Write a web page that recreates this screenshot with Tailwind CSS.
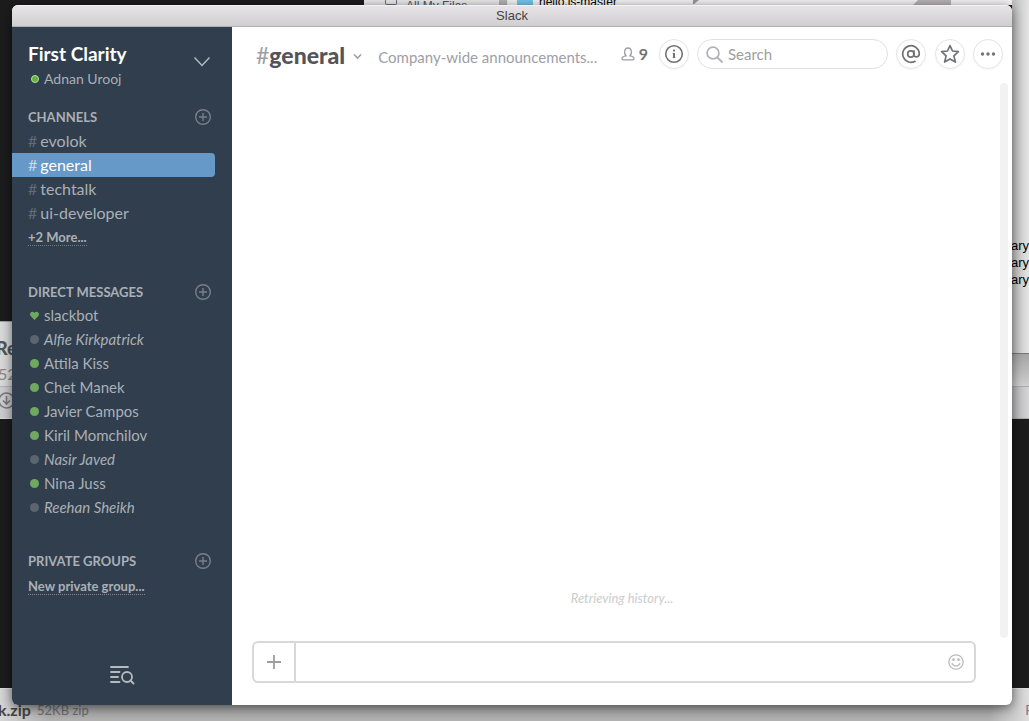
<!DOCTYPE html>
<html lang="en">
<head>
  <meta charset="UTF-8" />
  <meta name="viewport" content="width=device-width, initial-scale=1.0"/>
  <title>Slack</title>
  <script src="https://cdn.jsdelivr.net/npm/@tailwindcss/browser@4"></script>
</head>
<body class="relative h-screen overflow-hidden bg-[#1c1c1c] pt-[5px] pr-[17px] pb-4 pl-3 font-['Lato',sans-serif]">

  <!-- Windows behind -->
  <div aria-hidden="true">
    <div class="absolute top-0 right-0 left-[364px] h-[5px] overflow-hidden bg-[#ececec]">
      <div class="absolute top-0 left-[21px] h-[5px] w-3 rounded-b-xs border border-t-0 border-gray-500"></div>
      <span class="absolute top-0 left-[42px] font-['Liberation_Sans',sans-serif] text-xs leading-3 text-gray-600">All My Files</span>
      <div class="absolute top-0 left-[135px] h-[5px] w-2 bg-[#b5b5b5]"></div>
      <div class="absolute top-0 right-0 left-[144px] h-[5px] bg-[#f6f6f6]"></div>
      <div class="absolute top-0 left-[153px] h-[5px] w-4 bg-[#75c8ee]"></div>
      <span class="absolute -top-1 left-[175px] font-['Liberation_Sans',sans-serif] text-xs leading-3 text-black">hello.js-master</span>
      <svg class="absolute top-0 left-[329px]" width="6" height="5"><path d="M0 0h6L1 4H0z" fill="#9a9a9a"/></svg>
      <svg class="absolute top-0 left-[549px]" width="38" height="5"><path d="M5 0h33v5H0z" fill="#b9b4b8"/></svg>
    </div>
    <div class="absolute top-0 right-0 h-[353px] w-[17px] bg-linear-to-r from-[#bdbdbd] to-[#e4e4e4]"></div>
    <div class="absolute top-[237px] right-0 flex w-[17px] justify-end overflow-hidden font-['Liberation_Sans',sans-serif] text-[13px] leading-[17px] text-black"><span>uary<br>uary<br>uary</span></div>
    <div class="absolute top-[353px] right-0 h-[33px] w-[17px] border-t border-[#777] bg-linear-to-b from-[#a5a5a5] to-[#cfcfcf]"></div>
    <div class="absolute top-[386px] right-0 h-[33px] w-[17px] border-y border-[#aaa] bg-linear-to-r from-[#b5b5b8] to-[#d5d5d8]"></div>

    <div class="absolute top-[321px] left-0 h-[98px] w-3 overflow-hidden border-t border-gray-400 bg-[#dadada]">
      <div class="absolute top-4 -left-1 text-lg leading-5 font-black text-[#555]">Re</div>
      <div class="absolute top-11 -left-0.5 text-base leading-4 text-[#888]">52</div>
      <div class="absolute top-16 left-0 h-8 w-3 border-t border-[#b5b5b8] bg-[#cdcdd0]"></div>
      <svg class="absolute top-[70px] -left-0.5" width="17" height="17" fill="none" stroke="#7b7b7b" stroke-width="1.6"><circle cx="8.5" cy="8.5" r="7.5"/><path d="M8.5 4v8M5 8.5l3.500 3.500 3.500-3.500"/></svg>
    </div>

    <div class="absolute inset-x-0 bottom-0 h-[33px] border-t border-[#ddd] bg-linear-to-b from-[#a0a0a0] from-50% to-[#b2b2b2]">
      <div class="absolute top-0 left-0 h-8 w-12 bg-linear-to-r from-[#d6d6d6] to-transparent"></div>
      <div class="absolute top-0 right-0 h-8 w-10 bg-linear-to-l from-[#dedede] to-transparent"></div>
      <span class="absolute top-[11px] -left-0.5 text-base leading-5 font-bold text-[#444]">k.zip</span>
      <span class="absolute top-[11px] left-[37px] text-[13px] leading-5 text-[#6c6c6c]">52KB zip</span>
      <span class="absolute top-[11px] -right-1 text-[13px] leading-5 text-[#77778a]">P</span>
    </div>
  </div>

  <!-- App window -->
  <div class="relative flex h-full flex-col overflow-hidden rounded-md bg-white shadow-[0_2px_12px_rgba(0,0,0,0.55)]">
    <div class="flex h-[22px] shrink-0 items-center justify-center border-t border-b border-t-[#f2f0f2] border-b-[#b1aeb1] bg-linear-to-b from-[#e7e3e7] to-[#d0cfd0] font-['Liberation_Sans',sans-serif] text-[13px] leading-5 text-[#444]">Slack</div>

    <div class="flex min-h-0 grow">
      <!-- Sidebar -->
      <aside class="flex w-[220px] shrink-0 flex-col bg-[#303e4d] text-base leading-6 text-[#aab0b7]">
        <header class="flex h-[78px] items-start justify-between pt-3.5 pr-[21px] pl-4">
          <div>
            <h1 class="text-[19px] leading-[26px] font-bold text-white">First Clarity</h1>
            <p class="flex h-6 items-center gap-[5px] pl-[3px] text-sm"><span class="size-2 rounded-full border border-[#b8ddb0] bg-[#5fb336]"></span>Adnan Urooj</p>
          </div>
          <button class="mt-[15px]" aria-label="Team menu"><svg width="18" height="12" fill="none" stroke="#b5bac0" stroke-width="1.4"><path d="M1.500 1.500L9 9.500l7.500-8"/></svg></button>
        </header>

        <nav class="flex flex-col">
          <div class="flex h-6 items-center justify-between pr-5 pl-4">
            <h2 class="text-[13px] font-bold">CHANNELS</h2>
            <button aria-label="Add channel"><svg width="18" height="18" fill="none" stroke="#76818c" stroke-width="1.4"><circle cx="9" cy="9" r="7.300"/><path d="M9 5v8M5 9h8"/></svg></button>
          </div>
          <a href="#" class="flex h-6 items-center gap-[3px] pl-4"><span class="text-[#616d79]">#</span>evolok</a>
          <a href="#" class="mr-[17px] flex h-6 items-center gap-[3px] rounded-r bg-[#6698c8] pl-4 text-white"><span class="text-[#c5d9eb]">#</span>general</a>
          <a href="#" class="flex h-6 items-center gap-[3px] pl-4"><span class="text-[#616d79]">#</span>techtalk</a>
          <a href="#" class="flex h-6 items-center gap-[3px] pl-4"><span class="text-[#616d79]">#</span>ui-developer</a>
          <div class="flex h-6 items-center pl-4"><a href="#" class="border-b border-dotted border-[#717b86] text-[13px] leading-4 font-bold">+2 More...</a></div>
        </nav>

        <nav class="mt-[31px] flex flex-col text-[15px]">
          <div class="flex h-[23px] items-center justify-between pr-5 pl-4">
            <h2 class="text-[13px] font-bold">DIRECT MESSAGES</h2>
            <button aria-label="New message"><svg width="18" height="18" fill="none" stroke="#76818c" stroke-width="1.4"><circle cx="9" cy="9" r="7.300"/><path d="M9 5v8M5 9h8"/></svg></button>
          </div>
          <a href="#" class="flex h-6 items-center gap-[5px] pl-[18px]"><svg width="9" height="9" viewBox="0 0 9 9" fill="#6fa85f"><path d="M4.500 9L.6 5C-1.100 2.700 1.500-1 4.500 1.800 7.500-1 10.100 2.700 8.400 5z"/></svg>slackbot</a>
          <a href="#" class="flex h-6 items-center gap-[5px] pl-[18px] italic"><span class="size-[9px] rounded-full bg-[#5b6570]"></span>Alfie Kirkpatrick</a>
          <a href="#" class="flex h-6 items-center gap-[5px] pl-[18px]"><span class="size-[9px] rounded-full bg-[#6fa85f]"></span>Attila Kiss</a>
          <a href="#" class="flex h-6 items-center gap-[5px] pl-[18px]"><span class="size-[9px] rounded-full bg-[#6fa85f]"></span>Chet Manek</a>
          <a href="#" class="flex h-6 items-center gap-[5px] pl-[18px]"><span class="size-[9px] rounded-full bg-[#6fa85f]"></span>Javier Campos</a>
          <a href="#" class="flex h-6 items-center gap-[5px] pl-[18px]"><span class="size-[9px] rounded-full bg-[#6fa85f]"></span>Kiril Momchilov</a>
          <a href="#" class="flex h-6 items-center gap-[5px] pl-[18px] italic"><span class="size-[9px] rounded-full bg-[#5b6570]"></span>Nasir Javed</a>
          <a href="#" class="flex h-6 items-center gap-[5px] pl-[18px]"><span class="size-[9px] rounded-full bg-[#6fa85f]"></span>Nina Juss</a>
          <a href="#" class="flex h-6 items-center gap-[5px] pl-[18px] italic"><span class="size-[9px] rounded-full bg-[#5b6570]"></span>Reehan Sheikh</a>
        </nav>

        <nav class="mt-[30px] flex flex-col">
          <div class="flex h-6 items-center justify-between pr-5 pl-4">
            <h2 class="text-[13px] font-bold">PRIVATE GROUPS</h2>
            <button aria-label="Add group"><svg width="18" height="18" fill="none" stroke="#76818c" stroke-width="1.4"><circle cx="9" cy="9" r="7.300"/><path d="M9 5v8M5 9h8"/></svg></button>
          </div>
          <div class="flex h-[26px] items-center pl-4"><a href="#" class="border-b border-dotted border-[#8a8190] text-[13px] leading-4 font-bold">New private group...</a></div>
        </nav>

        <button class="mx-auto mt-auto mb-5" aria-label="Quick switcher"><svg width="25" height="20" fill="none" stroke="#b5bac0" stroke-width="1.8" stroke-linecap="round"><path d="M1 2h17M1 7h8.500M1 12h7M1 17h8.500"/><circle cx="17" cy="12" r="5"/><path d="M20.500 15.500l3 3"/></svg></button>
      </aside>

      <!-- Channel -->
      <main class="flex min-w-0 grow flex-col">
        <header class="flex h-14 shrink-0 items-center pr-[9px] pb-0.5 pl-6">
          <h2 class="flex items-center pt-0.5 text-[23px] leading-8 font-black text-[#555459]"><span class="font-normal text-[#9e9ea6]">#</span>general</h2>
          <button class="mt-1 ml-2" aria-label="Channel options"><svg width="9" height="7" fill="none" stroke="#9e9ea6" stroke-width="1.600"><path d="M1 1.500l3.500 3.500L8 1.500"/></svg></button>
          <p class="ml-4 grow truncate pt-1.5 text-[15px] leading-6 text-[#9e9ea6]">Company-wide announcements...</p>
          <button class="mr-[11px] flex items-center gap-1 text-base leading-6 font-bold text-[#717274]"><svg width="14" height="14" fill="none" stroke="#9e9ea6" stroke-width="1.300"><path d="M5 8.800C2.500 6 3.300 1 7 1s4.500 5 2 7.800c2.800.4 4 1.300 4 2.700 0 .8-.4 1.300-1 1.300H2c-.6 0-1-.5-1-1.300 0-1.400 1.200-2.300 4-2.700z"/></svg>9</button>
          <button class="mr-2 flex size-[30px] shrink-0 items-center justify-center rounded-full border border-[#e4e4e4] shadow-xs" aria-label="Channel info"><svg width="20" height="20" fill="none" stroke="#717274" stroke-width="1.600"><circle cx="10" cy="10" r="8.300"/><path d="M10 9v5" stroke-width="2"/><path d="M8.700 9.400H10M8.700 13.600h2.600" stroke-width="1"/><circle cx="10" cy="6.600" r="1.100" fill="#717274" stroke="none"/></svg></button>
          <label class="mr-2 flex h-[30px] w-[191px] shrink-0 items-center gap-[5px] rounded-full border border-[#e0e0e0] pl-2">
            <svg class="shrink-0" width="17" height="17" fill="none" stroke="#b3b3b7" stroke-width="1.800" stroke-linecap="round"><circle cx="7" cy="7" r="5.900"/><path d="M11.500 11.500L16 16"/></svg>
            <input type="text" placeholder="Search" aria-label="Search" class="w-full min-w-0 text-[15px] leading-6 placeholder:text-[#9e9ea0] focus:outline-none" />
          </label>
          <button class="mr-[9px] flex size-[30px] shrink-0 items-center justify-center rounded-full border border-[#e4e4e4] shadow-xs" aria-label="Mentions"><svg width="20" height="20" fill="none" stroke="#717274" stroke-width="1.700" stroke-linecap="round"><circle cx="9.800" cy="10" r="3.100"/><path d="M13 6.800v4.400c0 2.500 5.300 2.600 5.300-1.400A8.300 8.300 0 1 0 14 17.300"/></svg></button>
          <button class="mr-2 flex size-[30px] shrink-0 items-center justify-center rounded-full border border-[#e4e4e4] shadow-xs" aria-label="Starred items"><svg width="20" height="20" fill="none" stroke="#717274" stroke-width="1.700" stroke-linejoin="round"><path d="M10 1.600L12.500 7l5.900.6-4.500 4.300 1.500 6.200-5.400-3.200-5.400 3.200 1.500-6.200L1.600 7.600 7.500 7z"/></svg></button>
          <button class="flex size-[30px] shrink-0 items-center justify-center rounded-full border border-[#e4e4e4] shadow-xs" aria-label="More"><svg width="16" height="4" fill="#717274"><circle cx="2.500" cy="2" r="1.700"/><circle cx="8" cy="2" r="1.700"/><circle cx="13.500" cy="2" r="1.700"/></svg></button>
        </header>

        <div class="flex min-h-0 grow pr-1">
          <div class="flex grow items-end justify-center pb-[30px] pl-3">
            <p class="text-[13px] leading-5 text-[#cccccc] italic">Retrieving history...</p>
          </div>
          <div class="w-2 rounded-full bg-[#f2f2f2]"></div>
        </div>

        <form class="mt-[3px] mr-9 mb-[22px] ml-5 flex h-[42px] shrink-0 items-center rounded-md border-2 border-[#d8d8d8]">
          <button type="button" class="flex h-full w-[42px] shrink-0 items-center justify-center border-r-2 border-[#d8d8d8]" aria-label="Attach"><svg width="14" height="14" stroke="#9e9ea0" stroke-width="1.800"><path d="M7 0v14M0 7h14"/></svg></button>
          <input type="text" aria-label="Message" class="min-w-0 grow px-2 text-[15px] leading-6 focus:outline-none" />
          <button type="button" class="mr-2.5" aria-label="Emoji"><svg width="16" height="16" fill="none" stroke="#bcbcbc" stroke-width="1.300" stroke-linecap="round"><circle cx="8" cy="8" r="7.200"/><path d="M4.200 9.500c1.200 3.200 6.400 3.200 7.600 0"/><g fill="#bcbcbc" stroke="none"><circle cx="5.500" cy="5.700" r="1.400"/><circle cx="10.500" cy="5.700" r="1.400"/></g></svg></button>
        </form>
      </main>
    </div>
  </div>

</body>
</html>
